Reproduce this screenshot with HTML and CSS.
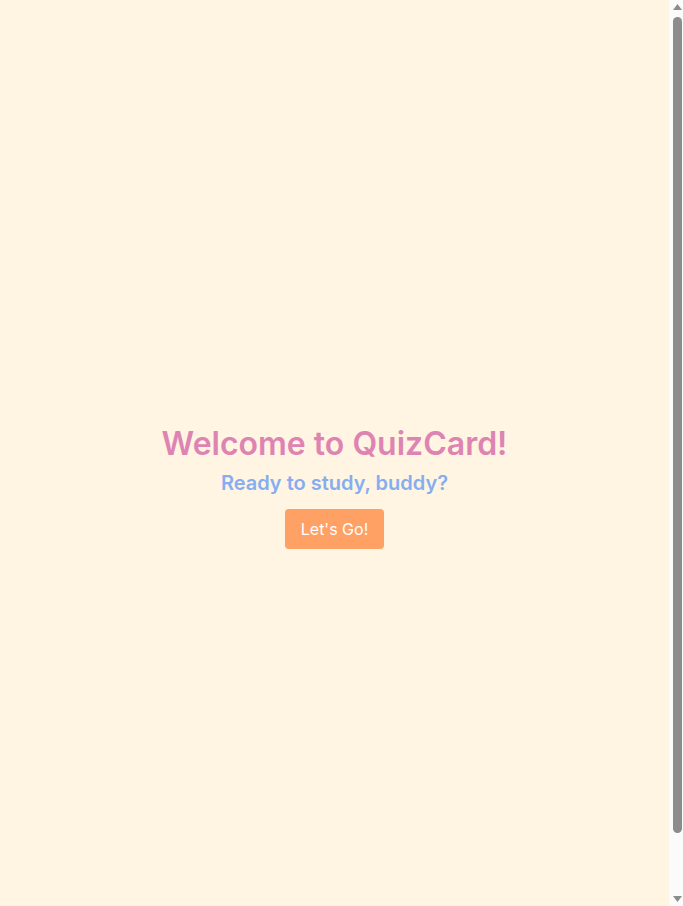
FILE: index.html
```html
<!DOCTYPE html>
<html lang="en">
<head>
<meta charset="utf-8">
<title>QuizCard</title>
<link rel="stylesheet" href="styles.css">
</head>
<body>
<div class="page">
  <main class="welcome">
    <h1 class="welcome-title">Welcome to QuizCard!</h1>
    <p class="welcome-sub">Ready to study, buddy?</p>
    <button class="go-btn" type="button">Let's Go!</button>
  </main>
  <div class="scrollbar" aria-hidden="true">
    <svg class="sb-arrow sb-up" width="9" height="6" viewBox="0 0 9 6"><path d="M4.5 0 L9 6 L0 6 Z" fill="#8c8c8c"/></svg>
    <div class="sb-thumb"></div>
    <div class="sb-space"></div>
    <svg class="sb-arrow sb-down" width="9" height="6" viewBox="0 0 9 6"><path d="M0 0 L9 0 L4.5 6 Z" fill="#8c8c8c"/></svg>
  </div>
</div>
</body>
</html>
```

FILE: styles.css
```css
html, body {
  margin: 0;
  padding: 0;
}
body {
  background: #fff5e2;
  font-family: Inter, "Noto Sans", sans-serif;
}
.page {
  display: flex;
  height: 100vh;
  overflow: hidden;
}
.welcome {
  flex: 1;
  box-sizing: border-box;
  padding-top: 66px;
  display: flex;
  flex-direction: column;
  align-items: center;
  justify-content: center;
  text-align: center;
}
.welcome-title {
  margin: 0 0 6px;
  font-size: 32px;
  font-weight: 600;
  line-height: 1.25;
  color: #de84b3;
}
.welcome-sub {
  margin: 0 0 13px;
  font-size: 20px;
  font-weight: 600;
  line-height: 1.3;
  color: #86adf0;
}
.go-btn {
  background: #ffa065;
  color: #fff;
  border: none;
  border-radius: 4px;
  padding: 0 15.5px;
  height: 40px;
  font-family: Inter, "Noto Sans", sans-serif;
  font-size: 16px;
  cursor: pointer;
}
.scrollbar {
  width: 14px;
  box-sizing: border-box;
  padding: 3px 1px 3px 4px;
  background: #fbfbfb;
  display: flex;
  flex-direction: column;
  align-items: center;
}
.sb-arrow {
  flex: none;
  display: block;
}
.sb-up {
  margin-top: 1px;
}
.sb-thumb {
  flex: none;
  width: 9px;
  height: 816px;
  margin-top: 7px;
  border-radius: 5px;
  background: #8c8c8c;
}
.sb-space {
  flex: 1;
}
.sb-down {
  margin-bottom: 1px;
}
```
